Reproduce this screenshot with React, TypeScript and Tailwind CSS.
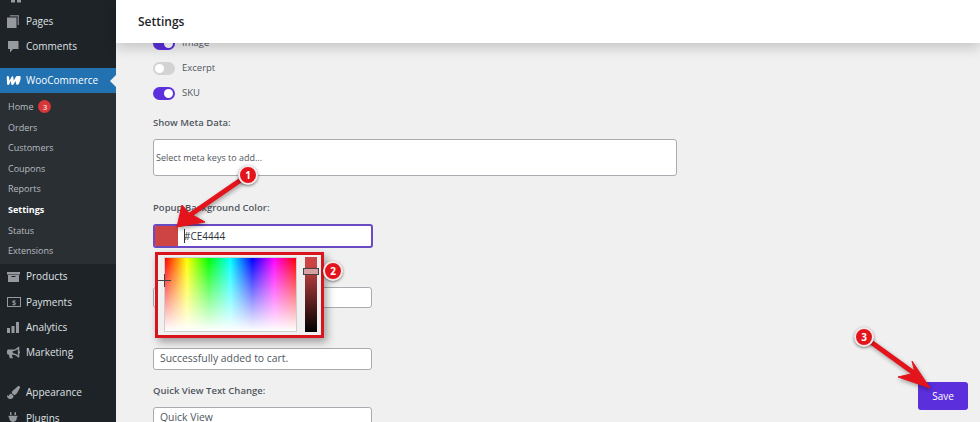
import { FaBullhorn, FaPaintBrush, FaPlug } from 'react-icons/fa';
import type { ReactNode } from 'react';

const font = { fontFamily: '"Open Sans", "Noto Sans", sans-serif' };

function PagesIcon() {
  return (
    <svg width="12" height="13" viewBox="0 0 12 13" fill="#969a9e">
      <path d="M3 0h9v10h-1.500V1.500H3z" fill="#73787c" />
      <path d="M0 2.500h9.500V13H0z" />
    </svg>
  );
}

function CommentIcon() {
  return (
    <svg width="12" height="13" viewBox="0 0 12 13" fill="#969a9e">
      <path d="M1 1h10.500v8H6l-3 3.500V9H1z" />
    </svg>
  );
}

function WooIcon() {
  return (
    <svg width="15" height="9" viewBox="0 0 16 10" fill="#fff">
      <path d="M0.5 1.200C.5.500 1 0 1.800 0c.6 0 1 .3 1.100 1l.7 4.400L5.800 1c.3-.6 1-.8 1.500-.4.3.2.4.5.5.9l.5 3.900L10.500 1C10.800.3 11.400 0 12 0h2.500C15.400 0 16 .6 16 1.500c0 2-.7 4.500-1.800 6.700-.5 1-1.300 1.600-2 1.600-.8 0-1.200-.6-1.400-1.500L10.300 5.500 8.400 8.800c-.5.800-1.100 1.200-1.700 1.200-.8 0-1.200-.6-1.300-1.400L5 5.400 3.500 8.800C3.100 9.600 2.600 10 2 10c-.7 0-1.100-.5-1.200-1.300z" />
    </svg>
  );
}

function ProductsIcon() {
  return (
    <svg width="13" height="10" viewBox="0 0 13 10" fill="#969a9e">
      <path d="M0 0h13v2.500H0zM1 3h11v7H1z" />
      <path d="M4.500 4h4v1H4.500z" fill="#1d2327" />
    </svg>
  );
}

function PaymentsIcon() {
  return (
    <div className="w-[14px] h-[10px] border-[1.500px] border-[#969a9e] flex items-center justify-center text-[7px] font-bold leading-none text-[#969a9e]">
      $
    </div>
  );
}

function AnalyticsIcon() {
  return (
    <svg width="12" height="11" viewBox="0 0 12 11" fill="#969a9e">
      <path d="M0 6h3v5H0zM4.500 4h3v7h-3zM9 0h3v11H9z" />
    </svg>
  );
}

function TopIcon() {
  return (
    <svg width="10" height="3" viewBox="0 0 10 3" fill="#969a9e">
      <path d="M0 0h4v2.500H0zM6 0h4v2.500H6z" />
    </svg>
  );
}

function MenuItem({ icon, label }: { icon: ReactNode; label: string }) {
  return (
    <div className="h-[25.300px] shrink-0 flex items-center text-[10px] text-[#dfe1e3]">
      <div className="w-[26px] pl-[7px] shrink-0 flex items-center text-[#969a9e]">{icon}</div>
      <span>{label}</span>
    </div>
  );
}

function SubItem({ label, active, badge }: { label: string; active?: boolean; badge?: string }) {
  return (
    <div className={`h-[20.570px] flex items-center gap-[5px] pl-[8px] text-[9px] ${active ? 'font-bold text-white' : 'text-[#b9bdc1]'}`}>
      <span>{label}</span>
      {badge && (
        <span className="w-[13px] h-[13px] rounded-full bg-[#d63638] text-white text-[8px] flex items-center justify-center">
          {badge}
        </span>
      )}
    </div>
  );
}

function Sidebar() {
  return (
    <aside className="w-[116px] shrink-0 bg-[#1e2327] flex flex-col overflow-hidden">
      <div className="h-[9px] shrink-0 pl-[11px]">
        <TopIcon />
      </div>
      <MenuItem icon={<PagesIcon />} label="Pages" />
      <MenuItem icon={<CommentIcon />} label="Comments" />
      <div className="h-[8px] shrink-0" />
      <div className="relative h-[25px] shrink-0 bg-[#2271b1] flex items-center text-[10px] text-white">
        <div className="w-[26px] pl-[6px] shrink-0">
          <WooIcon />
        </div>
        <span>WooCommerce</span>
        <div className="absolute right-0 top-[7px] border-y-[6px] border-r-[6px] border-y-transparent border-r-[#f0f0f1]" />
      </div>
      <div className="shrink-0 bg-[#2a2f34] pt-[4px] pb-[3px]">
        <SubItem label="Home" badge="3" />
        <SubItem label="Orders" />
        <SubItem label="Customers" />
        <SubItem label="Coupons" />
        <SubItem label="Reports" />
        <SubItem label="Settings" active />
        <SubItem label="Status" />
        <SubItem label="Extensions" />
      </div>
      <MenuItem icon={<ProductsIcon />} label="Products" />
      <MenuItem icon={<PaymentsIcon />} label="Payments" />
      <MenuItem icon={<AnalyticsIcon />} label="Analytics" />
      <MenuItem icon={<FaBullhorn size={13} />} label="Marketing" />
      <div className="h-[15px] shrink-0" />
      <MenuItem icon={<FaPaintBrush size={13} />} label="Appearance" />
      <MenuItem icon={<FaPlug size={12} />} label="Plugins" />
    </aside>
  );
}

function Toggle({ on, label }: { on?: boolean; label: string }) {
  return (
    <div className="h-[25px] flex items-center gap-[7px] text-[9.500px] text-[#50575e]">
      <div className={`w-[22px] h-[13px] rounded-full p-[2px] flex ${on ? 'bg-[#5b2fdc] justify-end' : 'bg-[#d3d3d3] justify-start'}`}>
        <div className="w-[9px] h-[9px] rounded-full bg-white" />
      </div>
      <span>{label}</span>
    </div>
  );
}

function Label({ children, className }: { children: ReactNode; className: string }) {
  return <div className={`text-[9.500px] font-semibold leading-[13px] text-[#50575e] ${className}`}>{children}</div>;
}

function TextBox({ value, className }: { value?: string; className: string }) {
  return (
    <div className={`w-[219px] bg-white border border-[#a8acb0] rounded-[3px] pl-[6px] flex items-center text-[10.400px] text-[#50575e] ${className}`}>
      {value}
    </div>
  );
}

function ColorPicker() {
  return (
    <div className="absolute left-[39px] top-[252px] w-[169px] h-[86px] border-[3px] border-[#d9141c] bg-[#f0f0f1] shadow-[3px_4px_8px_rgba(0,0,0,0.35)] flex pl-[6px] pt-[2px] gap-[8px] z-10">
      <div className="relative w-[133px] h-[75px] border border-[#cfcfcf] bg-[linear-gradient(to_right,#ff0000,#ffff00,#00ff00,#00ffff,#0000ff,#ff00ff,#ff0000)]">
        <div className="absolute inset-0 bg-[linear-gradient(to_bottom,rgba(255,255,255,0),#ffffff)]" />
        <div className="absolute left-[-7px] top-[22px] w-[13px] h-[1px] bg-[#444]" />
        <div className="absolute left-[-1px] top-[16px] w-[1px] h-[13px] bg-[#444]" />
      </div>
      <div className="relative w-[12px] h-[75px] bg-[linear-gradient(to_bottom,#ce4444_10%,#000000)]">
        <div className="absolute left-[-2px] top-[11px] w-[16px] h-[7px] bg-[#d8a0a0] border border-[#444]" />
      </div>
    </div>
  );
}

function Badge({ n, className }: { n: string; className: string }) {
  return (
    <div className={`absolute w-[20px] h-[20px] rounded-full bg-[#e3141b] border-2 border-[#f6e9e9] text-white text-[10px] font-bold flex items-center justify-center shadow-[0_1px_3px_rgba(0,0,0,0.5)] z-30 ${className}`}>
      {n}
    </div>
  );
}

export default function App() {
  return (
    <div className="relative w-[980px] h-[422px] overflow-hidden flex bg-[#f0f0f1]" style={font}>
      <Sidebar />
      <main className="relative flex-1 flex flex-col">
        <header className="relative z-20 h-[43px] shrink-0 bg-white flex items-center pl-[22px] text-[12px] font-semibold text-[#1d2327] shadow-[0_4px_14px_rgba(0,0,0,0.2)]">
          Settings
        </header>
        <div className="flex-1 -mt-[12px] pl-[37px] overflow-hidden">
          <Toggle on label="Image" />
          <Toggle label="Excerpt" />
          <Toggle on label="SKU" />
          <Label className="mt-[10px]">Show Meta Data:</Label>
          <div className="mt-[10px] w-[524px] h-[37px] bg-white border border-[#a8acb0] rounded-[3px] pl-[2px] flex items-center text-[9px] text-[#50575e]">
            Select meta keys to add...
          </div>
          <Label className="mt-[25px]">Popup Background Color:</Label>
          <div className="mt-[10px] w-[220px] h-[24px] flex border-2 border-[#6a4bc4] rounded-[3px] bg-white overflow-hidden">
            <div className="w-[23px] bg-[#ce4444]" />
            <div className="flex items-center pl-[6px] text-[10px] text-[#2c3338]">
              <span className="w-[1px] h-[14px] bg-[#333] mr-[-1px]" />
              #CE4444
            </div>
          </div>
          <TextBox className="mt-[39px] h-[21px]" />
          <TextBox value="Successfully added to cart." className="mt-[40px] h-[22px]" />
          <Label className="mt-[14px]">Quick View Text Change:</Label>
          <TextBox value="Quick View" className="mt-[10px] h-[22px]" />
        </div>
        <ColorPicker />
        <button className="absolute left-[802px] top-[382px] w-[50px] h-[28px] rounded-[3px] bg-[#5b2fdc] text-white text-[10px] font-medium z-10">
          Save
        </button>
      </main>

      {/* Tutorial arrows drawn over the page */}
      <svg className="absolute inset-0 z-20" width="980" height="422" viewBox="0 0 980 422">
        <g fill="#e3141b" stroke="#e3141b" strokeLinejoin="round" style={{ filter: 'drop-shadow(1px 2px 2px rgba(0,0,0,0.35))' }}>
          <path d="M248 175L190 215" strokeWidth="5" fill="none" />
          <path d="M177 227L182 205L189 213L205 222Z" strokeWidth="1" />
          <path d="M864 337L918 376" strokeWidth="5" fill="none" />
          <path d="M930 388L912 361L915 373L898 377Z" strokeWidth="1" />
        </g>
      </svg>
      <Badge n="1" className="left-[238px] top-[165px]" />
      <Badge n="2" className="left-[323px] top-[261px]" />
      <Badge n="3" className="left-[854px] top-[327px]" />
    </div>
  );
}
